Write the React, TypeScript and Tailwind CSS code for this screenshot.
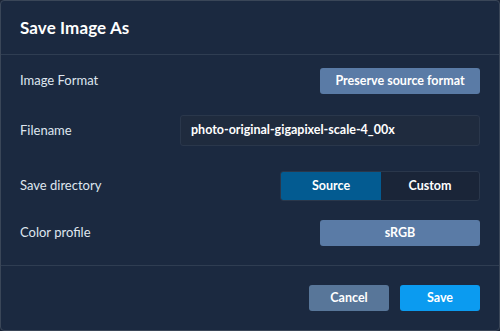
import React from "react";

export default function App() {
  return (
    <div
      className="w-[500px] h-[331px] bg-[#1a2436]"
      style={{ fontFamily: "Lato, 'Open Sans', sans-serif" }}
    >
      <div className="w-full h-full rounded-[4px] border border-[#3a4658] bg-[#1b2940] flex flex-col overflow-hidden">
        <div className="h-[54px] flex items-center px-[19px] border-b border-[#2f3d52]">
          <span className="text-[17px] font-bold text-white tracking-[0.1px]">Save Image As</span>
        </div>
        <div className="flex-1 flex flex-col px-[19px] pt-[13px] border-b border-[#2f3d52]">
          <div className="h-[26px] flex items-center justify-between">
            <span className="text-[13px] text-[#dfe6ef]">Image Format</span>
            <button className="w-[160px] h-[26px] rounded-[3px] bg-[#5a7ba6] text-white text-[12.5px] font-bold">
              Preserve source format
            </button>
          </div>
          <div className="h-[31px] mt-[21px] flex items-center justify-between">
            <span className="text-[13px] text-[#dfe6ef]">Filename</span>
            <div className="w-[300px] h-[31px] rounded-[3px] bg-[#1f2b3e] border border-[#2a374b] flex items-center px-[10px] text-white text-[12.5px] font-bold">
              photo-original-gigapixel-scale-4_00x
            </div>
          </div>
          <div className="h-[30px] mt-[25px] flex items-center justify-between">
            <span className="text-[13px] text-[#dfe6ef]">Save directory</span>
            <div className="w-[200px] h-[30px] rounded-[3px] border border-[#2a374b] bg-[#1a2538] flex overflow-hidden">
              <div className="w-[100px] h-full bg-[#035b91] flex items-center justify-center text-white text-[12.5px] font-bold">
                Source
              </div>
              <div className="flex-1 h-full flex items-center justify-center text-white text-[12.5px] font-bold">
                Custom
              </div>
            </div>
          </div>
          <div className="h-[26px] mt-[19px] flex items-center justify-between">
            <span className="text-[13px] text-[#dfe6ef]">Color profile</span>
            <button className="w-[160px] h-[26px] rounded-[3px] bg-[#5a7ba6] text-white text-[12.5px] font-bold">
              sRGB
            </button>
          </div>
        </div>
        <div className="h-[64px] flex items-center justify-end gap-[11px] px-[19px]">
          <button className="w-[80px] h-[26px] rounded-[3px] bg-[#587699] text-white text-[12.5px] font-bold">
            Cancel
          </button>
          <button className="w-[80px] h-[26px] rounded-[3px] bg-[#0b9bf0] text-white text-[12.5px] font-bold">
            Save
          </button>
        </div>
      </div>
    </div>
  );
}
